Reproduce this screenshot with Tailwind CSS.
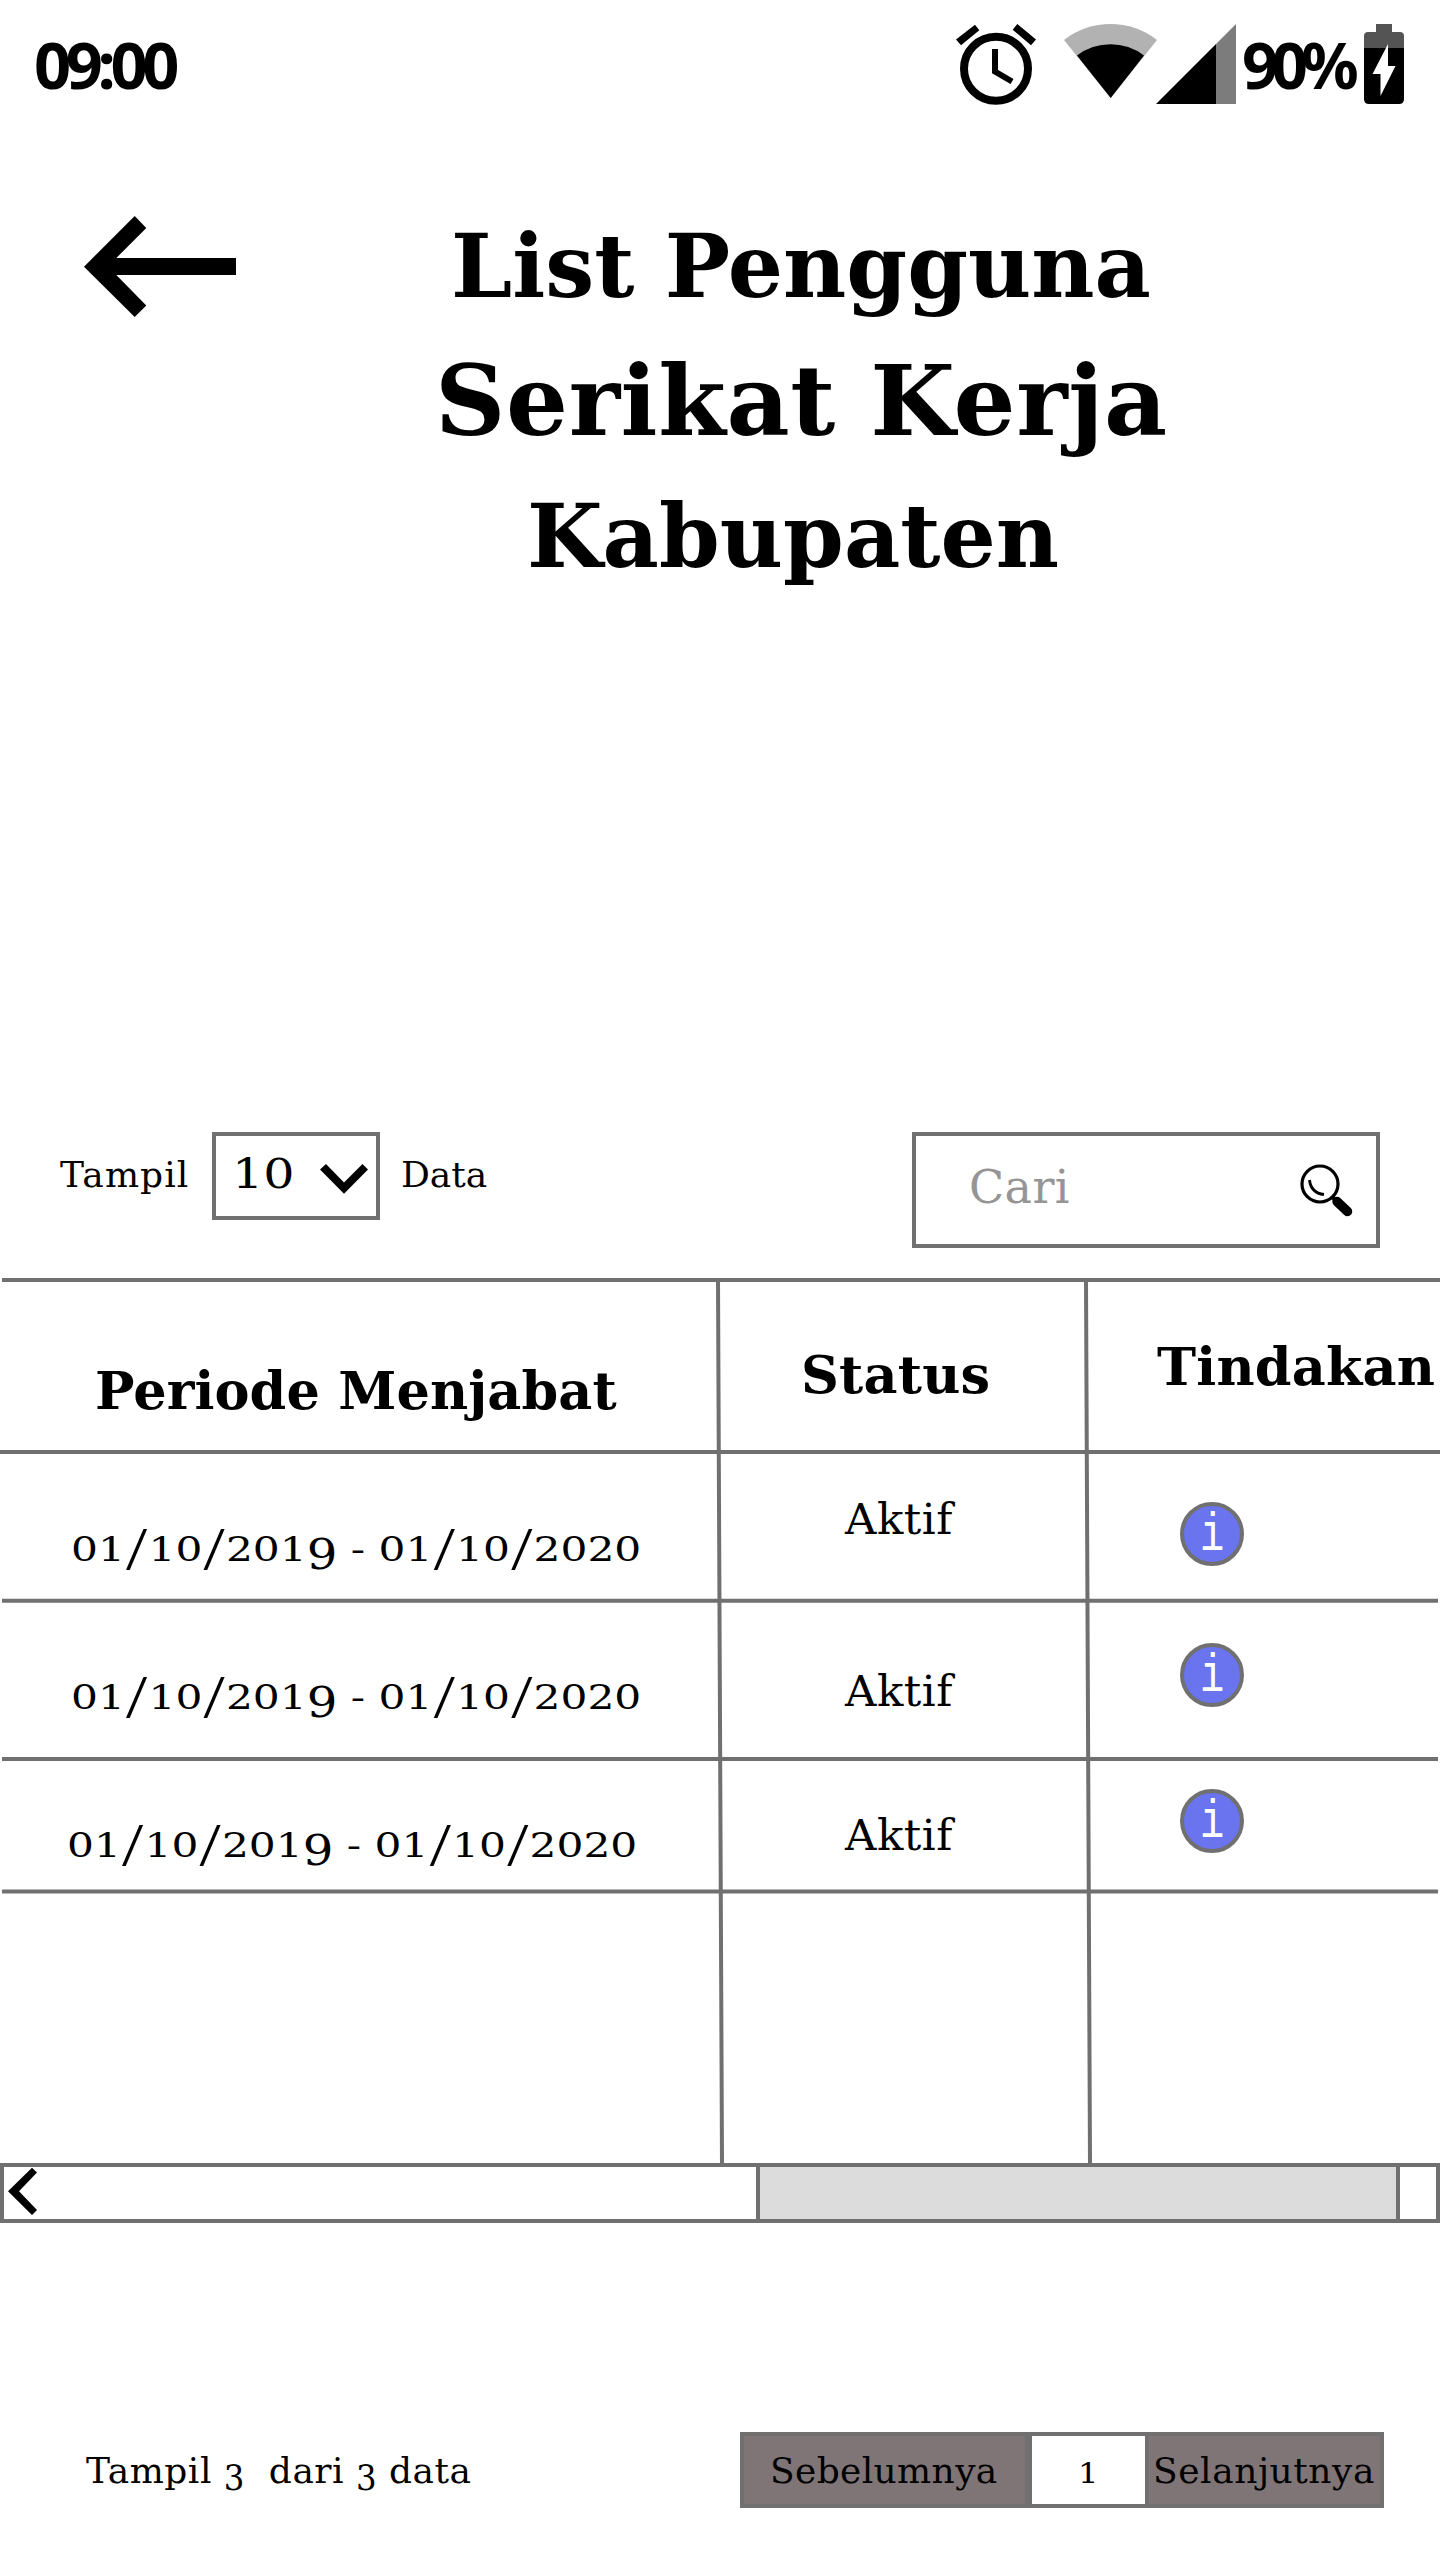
<!DOCTYPE html>
<html lang="id">
<head>
<meta charset="utf-8">
<title>List Pengguna Serikat Kerja Kabupaten</title>
<script src="https://cdn.jsdelivr.net/npm/@tailwindcss/browser@4"></script>
</head>
<body class="bg-white">
<main class="relative flex h-[2560px] w-[1440px] flex-col overflow-hidden bg-white font-['DejaVu_Serif',serif] leading-none whitespace-nowrap text-black">

  <!-- Status bar -->
  <div class="flex h-[120px] justify-between pl-[34px]">
    <div class="pt-[32px] font-['Noto_Sans',sans-serif] text-[65px] leading-none font-bold tracking-[-5.4px]">09:00</div>
    <div class="flex">
      <svg class="h-[120px] w-[302px]" viewBox="940 0 302 120">
        <circle cx="996" cy="68.7" r="32" fill="none" stroke="#000" stroke-width="8"/>
        <path d="M995 49V71.5L1012 81.5" fill="none" stroke="#000" stroke-width="6"/>
        <path d="M956 39.5L975 24.7L979.3 30.3L961 45.3ZM1036 39.5L1017.3 24L1012.7 29.7L1031 45.3Z"/>
        <path d="M1064 40A75.6 75.6 0 0 1 1157 40L1110.7 98Z" fill="#b2b2b2"/>
        <path d="M1077 55.5A55.3 55.3 0 0 1 1144 55.5L1110.7 98Z"/>
        <path d="M1156 104L1216 44V104Z"/>
        <path d="M1216 44L1236 24V104H1216Z" fill="#7c7c7c"/>
      </svg>
      <div class="w-[122px] pt-[32px] font-['Noto_Sans',sans-serif] text-[65px] leading-none font-bold tracking-[-7px]"><span class="inline-block origin-left scale-x-[0.98]">90%</span></div>
      <svg class="h-[120px] w-[76px]" viewBox="1364 0 76 120">
        <path d="M1364 48V36Q1364 32 1368 32H1376V24H1392V32H1400Q1404 32 1404 36V48Z" fill="#545454"/>
        <path d="M1364 48H1404V99Q1404 104 1399 104H1369Q1364 104 1364 99Z"/>
        <path d="M1388 44V66H1395.5L1380.5 96V74H1372.5Z" fill="#fff"/>
      </svg>
    </div>
  </div>

  <!-- Page header -->
  <header class="flex h-[1012px] pl-[84px]">
    <svg class="mt-[96px] h-[102px] w-[152px]" viewBox="84 216 152 102">
      <path d="M84 266.7L134.7 216L146.3 228L116.3 258H236V275H116.3L146.3 305.5L134.7 317Z"/>
    </svg>
    <h1 class="flex flex-col pt-[103px] pl-[199px] font-bold">
      <span class="pl-[16px] text-[87px]">List Pengguna</span>
      <span class="mt-[42px] text-[97.5px] tracking-[0.6px]">Serikat Kerja</span>
      <span class="mt-[43px] pl-[92px] text-[87px]">Kabupaten</span>
    </h1>
  </header>

  <!-- Page size and search -->
  <div class="flex h-[146px] items-start text-[36px]">
    <span class="w-[212px] pt-[25px] pl-[60px] tracking-[1.1px]">Tampil</span>
    <div class="flex h-[88px] w-[168px] border-4 border-[#707070]">
      <span class="w-[104px] pt-[18px] pl-[16px]"><span class="inline-block origin-left scale-x-120 text-[41px]">10</span></span>
      <svg class="mt-[28px] h-[30px] w-[48px]" viewBox="320 1164 48 30">
        <path d="M320 1169.5L326 1164L344 1182.5L362.5 1164L368 1169.5L344 1193.7Z"/>
      </svg>
    </div>
    <span class="w-[532px] pt-[25px] pl-[21px]">Data</span>
    <div class="flex h-[116px] w-[468px] justify-between border-4 border-[#707070]">
      <span class="pt-[28px] pl-[53px] text-[46px] tracking-[0.4px] text-[#959595]">Cari</span>
      <svg class="mt-[26px] mr-[22px] h-[56px] w-[56px]" viewBox="1298 1162 56 56" fill="none" stroke="#000">
        <circle cx="1320" cy="1184" r="18" stroke-width="3.2"/>
        <path d="M1309.5 1180Q1311 1193 1324 1194.5" stroke-width="2.8"/>
        <path d="M1331.5 1196L1336 1200.5" stroke-width="4"/>
        <path d="M1337 1201.5L1347.5 1211.5" stroke-width="9.5" stroke-linecap="round"/>
      </svg>
    </div>
  </div>

  <!-- Member table -->
  <section class="relative grid h-[885px] grid-cols-[720px_368px_352px] grid-rows-[172px_149px_158px_132px_274px]">
    <div class="pt-[87px] pl-[95px] text-[52.5px] font-bold tracking-[0.1px]">Periode Menjabat</div>
    <div class="pt-[71px] pl-[81px] text-[52.5px] font-bold tracking-[0.2px]">Status</div>
    <div class="pt-[63px] pl-[69px] text-[52.5px] font-bold tracking-[0.2px]">Tindakan</div>

    <div class="pt-[82px] pl-[71px] text-[34px] leading-[34px]"><span class="inline-block origin-left scale-x-[1.245]">01<span class="px-px align-[-8px] font-['Liberation_Serif',serif] text-[61px] leading-[0]">/</span>10<span class="px-px align-[-8px] font-['Liberation_Serif',serif] text-[61px] leading-[0]">/</span>201<span class="align-[-8px] font-['DejaVu_Serif_Condensed','DejaVu_Serif',serif] text-[43px] leading-[0]">9</span> - 01<span class="px-px align-[-8px] font-['Liberation_Serif',serif] text-[61px] leading-[0]">/</span>10<span class="px-px align-[-8px] font-['Liberation_Serif',serif] text-[61px] leading-[0]">/</span>2020</span></div>
    <div class="pt-[48px] pl-[125px] text-[43.5px] tracking-[0.5px]">Aktif</div>
    <div class="pt-[52px] pl-[92px]"><button class="flex size-16 justify-center rounded-full border-4 border-[#707070] bg-[#6a74ee] font-['Liberation_Mono',monospace] text-[54px] leading-[60px] text-white"><span class="scale-x-75">i</span></button></div>

    <div class="pt-[81px] pl-[71px] text-[34px] leading-[34px]"><span class="inline-block origin-left scale-x-[1.245]">01<span class="px-px align-[-8px] font-['Liberation_Serif',serif] text-[61px] leading-[0]">/</span>10<span class="px-px align-[-8px] font-['Liberation_Serif',serif] text-[61px] leading-[0]">/</span>201<span class="align-[-8px] font-['DejaVu_Serif_Condensed','DejaVu_Serif',serif] text-[43px] leading-[0]">9</span> - 01<span class="px-px align-[-8px] font-['Liberation_Serif',serif] text-[61px] leading-[0]">/</span>10<span class="px-px align-[-8px] font-['Liberation_Serif',serif] text-[61px] leading-[0]">/</span>2020</span></div>
    <div class="pt-[71px] pl-[125px] text-[43.5px] tracking-[0.5px]">Aktif</div>
    <div class="pt-[44px] pl-[92px]"><button class="flex size-16 justify-center rounded-full border-4 border-[#707070] bg-[#6a74ee] font-['Liberation_Mono',monospace] text-[54px] leading-[60px] text-white"><span class="scale-x-75">i</span></button></div>

    <div class="pt-[71px] pl-[67px] text-[34px] leading-[34px]"><span class="inline-block origin-left scale-x-[1.245]">01<span class="px-px align-[-8px] font-['Liberation_Serif',serif] text-[61px] leading-[0]">/</span>10<span class="px-px align-[-8px] font-['Liberation_Serif',serif] text-[61px] leading-[0]">/</span>201<span class="align-[-8px] font-['DejaVu_Serif_Condensed','DejaVu_Serif',serif] text-[43px] leading-[0]">9</span> - 01<span class="px-px align-[-8px] font-['Liberation_Serif',serif] text-[61px] leading-[0]">/</span>10<span class="px-px align-[-8px] font-['Liberation_Serif',serif] text-[61px] leading-[0]">/</span>2020</span></div>
    <div class="pt-[57px] pl-[125px] text-[43.5px] tracking-[0.5px]">Aktif</div>
    <div class="pt-[32px] pl-[92px]"><button class="flex size-16 justify-center rounded-full border-4 border-[#707070] bg-[#6a74ee] font-['Liberation_Mono',monospace] text-[54px] leading-[60px] text-white"><span class="scale-x-75">i</span></button></div>

    <!-- Grid lines; the column rules lean slightly to the right -->
    <svg class="pointer-events-none absolute inset-0 h-[885px] w-[1440px]" viewBox="0 1278 1440 885" fill="none" stroke="#707070" stroke-width="4">
      <path d="M2 1280H1440M0 1452H1440M2 1600.7H1438M2 1759H1438M2 1891.5H1438"/>
      <path d="M718 1280L722 2163M1086 1280L1090 2163"/>
    </svg>
  </section>

  <!-- Horizontal scrollbar -->
  <div class="flex h-[60px] border-4 border-[#707070]">
    <svg class="ml-[4px] h-[52px] w-[30px]" viewBox="8 2167 30 52">
      <path d="M8 2191.3L32 2167.7L37 2172.5L19 2191.3L37 2210L32 2215Z"/>
    </svg>
    <div class="ml-[718px] w-[644px] border-x-4 border-[#707070] bg-[#dcdcdc]"></div>
  </div>

  <!-- Pagination -->
  <footer class="mt-[209px] flex text-[36px]">
    <div class="w-[740px] pt-[21px] pl-[86px] tracking-[0.5px]">Tampil <span class="align-[-7px] font-['DejaVu_Serif_Condensed','DejaVu_Serif',serif] leading-[0]">3</span>&nbsp; dari <span class="align-[-7px] font-['DejaVu_Serif_Condensed','DejaVu_Serif',serif] leading-[0]">3</span> data</div>
    <button class="h-[76px] w-[289px] border-4 border-[#707070] bg-[#7f7577] pt-[17px] pl-[26px] text-left leading-none tracking-[0.35px]"><span class="block h-[51px]">Sebelumnya</span></button>
    <div class="h-[76px] w-[116px] border-y-4 border-l-3 border-[#707070] pt-[24px] pl-[46px] text-[28px]"><span class="inline-block origin-left scale-x-115">1</span></div>
    <button class="h-[76px] w-[239px] border-4 border-[#707070] bg-[#7f7577] pt-[17px] pl-[4px] text-left leading-none tracking-[0.55px]"><span class="block h-[51px]">Selanjutnya</span></button>
  </footer>
</main>
</body>
</html>
